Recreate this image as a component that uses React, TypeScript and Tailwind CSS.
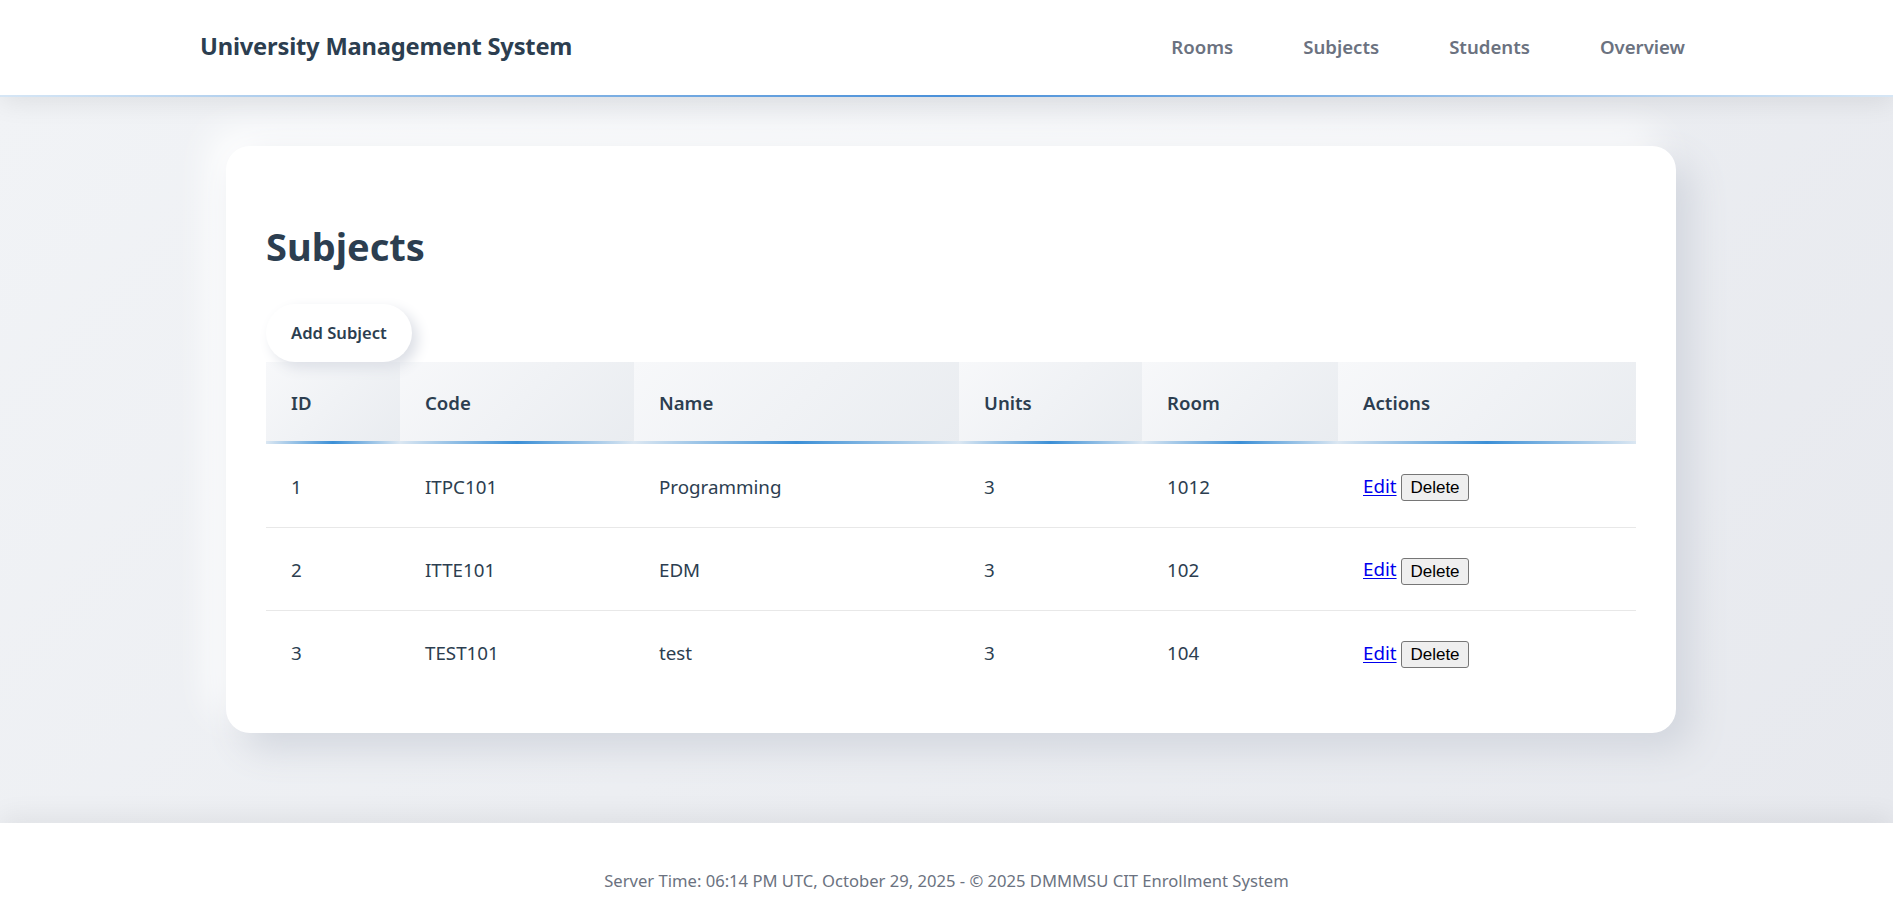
import React from "react";

const subjects = [
  { id: 1, code: "ITPC101", name: "Programming", units: 3, room: "1012" },
  { id: 2, code: "ITTE101", name: "EDM", units: 3, room: "102" },
  { id: 3, code: "TEST101", name: "test", units: 3, room: "104" },
];

const columns = [
  { label: "ID", width: "w-[134px]" },
  { label: "Code", width: "w-[234px]" },
  { label: "Name", width: "w-[325px]" },
  { label: "Units", width: "w-[183px]" },
  { label: "Room", width: "w-[196px]" },
  { label: "Actions", width: "w-[298px]" },
];

const navLinks = ["Rooms", "Subjects", "Students", "Overview"];

export default function App() {
  return (
    <div className="min-h-screen flex flex-col bg-white font-['Noto_Sans',sans-serif] text-[#2c3e50]">
      {/* header */}
      <header className="relative z-20 bg-white shadow-[0_6px_24px_rgba(0,0,0,0.08)]">
        <div className="h-[95px] flex items-center justify-between pl-[200px] pr-[208px]">
          <h1 className="text-[23.7px] font-bold tracking-[-0.2px] pb-[2px]">University Management System</h1>
          <nav className="flex items-center gap-[70px] pb-[2px]">
            {navLinks.map((link) => (
              <a key={link} href="#" className="text-[18.6px] font-semibold text-[#6b7280]">
                {link}
              </a>
            ))}
          </nav>
        </div>
        <div className="h-[2px] bg-[linear-gradient(90deg,#d6e6f5,#4a90d9_50%,#d6e6f5)]" />
      </header>

      {/* main */}
      <main className="relative z-0 min-h-[726px] pt-[49px] pb-[90px] bg-[linear-gradient(135deg,#f1f3f6,#e7e9ee)]">
        <div className="ml-[226px] w-[1450px] bg-white rounded-[24px] p-[40px] shadow-[16px_16px_36px_#d2d6de,-16px_-16px_36px_#ffffff]">
          <h2 className="mt-[30px] mb-[28px] text-[38px] leading-[60px] font-bold">Subjects</h2>
          <button className="h-[58px] px-[25px] rounded-full bg-white text-[16.6px] font-semibold text-[#2c3e50] shadow-[6px_6px_14px_#dcdfe6,-6px_-6px_14px_#ffffff]">
            Add Subject
          </button>
          <table className="w-[1370px] table-fixed border-collapse">
            <thead>
              <tr>
                {columns.map((col) => (
                  <th key={col.label} className={`${col.width} h-[82px] p-0 text-left align-middle`}>
                    <div className="h-[82px] flex flex-col bg-[linear-gradient(135deg,#f7f8fa,#e9ecf0)]">
                      <span className="flex-1 flex items-center px-[25px] pt-[2px] text-[18.6px] font-semibold">{col.label}</span>
                      <span className="h-[3px] bg-[linear-gradient(90deg,#dbe7f2,#3b8fd6_50%,#dbe7f2)]" />
                    </div>
                  </th>
                ))}
              </tr>
            </thead>
            <tbody>
              {subjects.map((s, i) => (
                <tr key={s.id} className={i < subjects.length - 1 ? "border-b border-[#e8e8e8]" : ""}>
                  <td className="h-[83px] px-[25px] pt-[3px] text-[18.75px]">{s.id}</td>
                  <td className="h-[83px] px-[25px] pt-[3px] text-[18.75px]">{s.code}</td>
                  <td className="h-[83px] px-[25px] pt-[3px] text-[18.75px]">{s.name}</td>
                  <td className="h-[83px] px-[25px] pt-[3px] text-[18.75px]">{s.units}</td>
                  <td className="h-[83px] px-[25px] pt-[3px] text-[18.75px]">{s.room}</td>
                  <td className="h-[83px] px-[25px] pt-[3px] text-[18.75px]">
                    <a href="#" className="text-[#0000ee] underline underline-offset-[2px]">Edit</a>{" "}
                    <button className="h-[27px] px-[8px] rounded-[3px] border border-[#767676] bg-[#efefef] text-[17px] leading-none text-black font-['Liberation_Sans',Arial,sans-serif] align-middle">
                      Delete
                    </button>
                  </td>
                </tr>
              ))}
            </tbody>
          </table>
        </div>
      </main>

      {/* footer */}
      <footer className="relative z-10 bg-white pt-[46px] pb-[30px] text-center shadow-[0_-8px_24px_rgba(0,0,0,0.06)]">
        <p className="text-[16.6px] text-[#6b7280]">
          Server Time: 06:14 PM UTC, October 29, 2025 - © 2025 DMMMSU CIT Enrollment System
        </p>
      </footer>
    </div>
  );
}
